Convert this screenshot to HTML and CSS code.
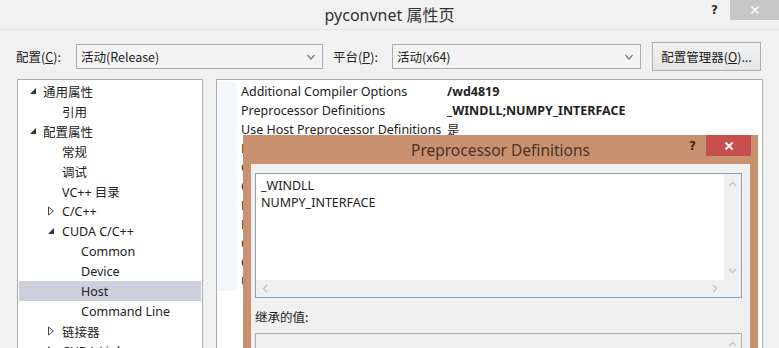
FILE: index.html
```html
<!DOCTYPE html>
<html lang="zh">
<head>
<meta charset="utf-8">
<title>pyconvnet 属性页</title>
<link rel="stylesheet" href="styles.css">
</head>
<body>
<div class="window">
  <div class="titlebar">
    <div></div>
    <div class="title">pyconvnet 属性页</div>
    <div class="caption-btns">
      <span class="help">?</span>
      <span class="close">
        <svg width="10" height="10" viewBox="0 0 10 10"><path d="M1.5 1.5 L8.5 8.5 M8.5 1.5 L1.5 8.5" stroke="#fff" stroke-width="1.5"/></svg>
      </span>
    </div>
  </div>

  <div class="toolbar">
    <label class="lbl lbl-config">配置(<u>C</u>):</label>
    <div class="combo combo-config"><span>活动(Release)</span><svg class="chev" width="8" height="6" viewBox="0 0 8 6"><path d="M0.5 1 L4 5 L7.5 1" fill="none" stroke="#777" stroke-width="1.2"/></svg></div>
    <label class="lbl lbl-platform">平台(<u>P</u>):</label>
    <div class="combo combo-platform"><span>活动(x64)</span><svg class="chev" width="8" height="6" viewBox="0 0 8 6"><path d="M0.5 1 L4 5 L7.5 1" fill="none" stroke="#777" stroke-width="1.2"/></svg></div>
    <button class="btn">配置管理器(<u>O</u>)...</button>
  </div>

  <div class="panels">
    <div class="tree">
      <div class="node l1"><span class="tog"><svg width="8" height="8" viewBox="0 0 8 8"><path d="M7 1 L7 7 L1 7 Z" fill="#333"/></svg></span>通用属性</div>
      <div class="node l2"><span class="tog"></span>引用</div>
      <div class="node l1"><span class="tog"><svg width="8" height="8" viewBox="0 0 8 8"><path d="M7 1 L7 7 L1 7 Z" fill="#333"/></svg></span>配置属性</div>
      <div class="node l2"><span class="tog"></span>常规</div>
      <div class="node l2"><span class="tog"></span>调试</div>
      <div class="node l2"><span class="tog"></span>VC++ 目录</div>
      <div class="node l2"><span class="tog"><svg width="8" height="10" viewBox="0 0 8 10"><path d="M1.5 1 L6.5 5 L1.5 9 Z" fill="none" stroke="#444" stroke-width="1"/></svg></span>C/C++</div>
      <div class="node l2"><span class="tog"><svg width="8" height="8" viewBox="0 0 8 8"><path d="M7 1 L7 7 L1 7 Z" fill="#333"/></svg></span>CUDA C/C++</div>
      <div class="node l3"><span class="tog"></span>Common</div>
      <div class="node l3"><span class="tog"></span>Device</div>
      <div class="node l3 selected"><span class="tog"></span>Host</div>
      <div class="node l3"><span class="tog"></span>Command Line</div>
      <div class="node l2"><span class="tog"><svg width="8" height="10" viewBox="0 0 8 10"><path d="M1.5 1 L6.5 5 L1.5 9 Z" fill="none" stroke="#444" stroke-width="1"/></svg></span>链接器</div>
      <div class="node l2"><span class="tog"><svg width="8" height="10" viewBox="0 0 8 10"><path d="M1.5 1 L6.5 5 L1.5 9 Z" fill="none" stroke="#444" stroke-width="1"/></svg></span>CUDA Linker</div>
    </div>

    <div class="grid">
      <div class="prop"><span class="stripe"></span><span class="name">Additional Compiler Options</span><span class="value">/wd4819</span></div>
      <div class="prop"><span class="stripe"></span><span class="name">Preprocessor Definitions</span><span class="value">_WINDLL;NUMPY_INTERFACE</span></div>
      <div class="prop"><span class="stripe"></span><span class="name">Use Host Preprocessor Definitions</span><span class="value plain">是</span></div>
      <div class="prop"><span class="stripe"></span><span class="name">Emulation</span></div>
      <div class="prop"><span class="stripe"></span><span class="name">Generate Hosted Debug Information</span></div>
      <div class="prop"><span class="stripe"></span><span class="name">Optimization</span></div>
      <div class="prop"><span class="stripe"></span><span class="name">Runtime Library</span></div>
      <div class="prop"><span class="stripe"></span><span class="name">Basic Runtime Checks</span></div>
      <div class="prop"><span class="stripe"></span><span class="name">Compiler Warning Level</span></div>
      <div class="prop"><span class="stripe"></span><span class="name">Check Allocation</span></div>
      <div class="prop"><span class="stripe"></span><span class="name">Use Host Library</span></div>
    </div>
  </div>

  <div class="dialog">
    <div class="dlg-title">
      <div></div>
      <div class="dlg-caption">Preprocessor Definitions</div>
      <div class="dlg-btns">
        <span class="dlg-help">?</span>
        <span class="dlg-close"><svg width="10" height="10" viewBox="0 0 10 10"><path d="M1.5 1.5 L8.5 8.5 M8.5 1.5 L1.5 8.5" stroke="#fff" stroke-width="1.8"/></svg></span>
      </div>
    </div>
    <div class="dlg-client">
      <div class="editbox">
        <div class="edit-main">
          <div class="edit-text">_WINDLL<br>NUMPY_INTERFACE</div>
          <div class="vscroll">
            <svg width="9" height="6" viewBox="0 0 9 6"><path d="M1 5 L4.5 1.5 L8 5" fill="none" stroke="#c4c4c4" stroke-width="1.4"/></svg>
            <svg width="9" height="6" viewBox="0 0 9 6"><path d="M1 1 L4.5 4.5 L8 1" fill="none" stroke="#c4c4c4" stroke-width="1.4"/></svg>
          </div>
        </div>
        <div class="hscroll">
          <svg width="6" height="9" viewBox="0 0 6 9"><path d="M5 1 L1.5 4.5 L5 8" fill="none" stroke="#c4c4c4" stroke-width="1.4"/></svg>
          <svg width="6" height="9" viewBox="0 0 6 9"><path d="M1 1 L4.5 4.5 L1 8" fill="none" stroke="#c4c4c4" stroke-width="1.4"/></svg>
          <span class="corner"></span>
        </div>
      </div>
      <div class="inherit-label">继承的值:</div>
      <div class="inherit-box">
        <div class="inherit-text"></div>
        <div class="vscroll small">
          <svg width="9" height="6" viewBox="0 0 9 6"><path d="M1 5 L4.5 1.5 L8 5" fill="none" stroke="#c4c4c4" stroke-width="1.4"/></svg>
        </div>
      </div>
    </div>
  </div>
</div>
</body>
</html>
```

FILE: styles.css
```css
* { box-sizing: border-box; }
html, body { margin: 0; padding: 0; }
body {
  width: 779px;
  height: 348px;
  overflow: hidden;
  background: #f0f0f0;
  font-family: "Noto Sans", "Noto Sans CJK SC", sans-serif;
  color: #1e1e1e;
}
.window {
  position: relative;
  width: 779px;
  height: 348px;
  background: #f1f1f1;
}

/* main title bar */
.titlebar {
  height: 30px;
  display: grid;
  grid-template-columns: 1fr auto 1fr;
  align-items: start;
  border-bottom: 1px solid #e3e3e3;
}
.title {
  font-family: "Noto Sans", "Noto Sans CJK SC", sans-serif;
  font-size: 16px;
  line-height: 30px;
  color: #333;
}
.caption-btns {
  display: flex;
  justify-content: flex-end;
  align-items: flex-start;
}
.help {
  font-family: "DejaVu Sans", sans-serif;
  font-weight: bold;
  font-size: 12px;
  line-height: 20px;
  color: #333;
  margin-right: 12px;
}
.close {
  width: 49px;
  height: 20px;
  background: #c7c7c7;
  display: flex;
  align-items: center;
  justify-content: center;
}

/* toolbar */
.toolbar {
  display: flex;
  align-items: center;
  height: 49px;
  padding: 4px 0 0 16px;
  font-family: "Noto Sans CJK SC", sans-serif;
}
.lbl {
  color: #222;
  font-size: 12.5px;
  white-space: nowrap;
  flex: none;
}
.lbl-config { width: 60px; }
.lbl-platform { width: 59px; margin-left: 10px; }
.combo {
  height: 25px;
  border: 1px solid #acacac;
  background: #f4f4f4;
  display: flex;
  align-items: center;
  justify-content: space-between;
  padding: 0 7px 0 4px;
  font-size: 12.5px;
  color: #222;
  flex: none;
}
.combo-config { width: 247px; }
.combo-platform { width: 249px; }
.btn {
  margin-left: 11px;
  width: 109px;
  height: 29px;
  border: 1px solid #acacac;
  background: linear-gradient(#f2f2f2, #e6e6e6);
  font-family: "Noto Sans CJK SC", sans-serif;
  font-size: 12.5px;
  color: #222;
  padding: 0;
  flex: none;
}

/* panels */
.panels {
  display: flex;
  gap: 13px;
  padding-left: 17px;
  height: 290px;
}
.tree {
  width: 186px;
  border: 1px solid #acacac;
  border-bottom: none;
  background: #fff;
  padding: 1px 1px 0;
  font-size: 12.5px;
  color: #222;
}
.node {
  height: 20px;
  display: flex;
  align-items: center;
  white-space: nowrap;
  font-family: "Noto Sans", "Noto Sans CJK SC", sans-serif;
}
.node .tog {
  width: 19px;
  height: 20px;
  display: flex;
  align-items: center;
  padding-left: 5px;
  flex: none;
}
.node.l1 { padding-left: 5px; }
.node.l2 { padding-left: 24px; }
.node.l3 { padding-left: 43px; }
.node.l2 .tog { padding-left: 4px; }
.node.selected { background: #cdd0dc; }

.grid {
  width: 547px;
  border: 1px solid #acacac;
  border-bottom: none;
  background: #fff;
  padding-top: 2px;
  font-size: 12.5px;
  color: #222;
}
.prop {
  height: 19px;
  display: flex;
  align-items: center;
  white-space: nowrap;
}
.stripe {
  width: 20px;
  height: 19px;
  background: #f3f6fb;
  flex: none;
}
.name {
  width: 210px;
  padding-left: 4px;
  flex: none;
  overflow: hidden;
}
.value { font-weight: bold; font-family: "Noto Sans", "Noto Sans CJK SC", sans-serif; }
.value.plain { font-weight: normal; }

/* dialog overlay */
.dialog {
  position: absolute;
  left: 243px;
  top: 135px;
  width: 515px;
  height: 230px;
  background: #c8916f;
  padding: 0 8px 0 8px;
}
.dlg-title {
  height: 29px;
  display: grid;
  grid-template-columns: 1fr auto 1fr;
  margin: 0 -8px;
}
.dlg-caption {
  font-size: 15.5px;
  line-height: 31px;
  color: #4f3223;
}
.dlg-btns {
  display: flex;
  justify-content: flex-end;
  align-items: flex-start;
  padding-right: 7px;
}
.dlg-help {
  font-family: "DejaVu Sans", sans-serif;
  font-weight: bold;
  font-size: 12px;
  line-height: 22px;
  color: #3a2418;
  margin-right: 10px;
}
.dlg-close {
  width: 45px;
  height: 21px;
  background: #c84f4f;
  display: flex;
  align-items: center;
  justify-content: center;
}
.dlg-client {
  background: #f0f0f0;
  height: 210px;
  padding: 9px 8px 0 4px;
}
.editbox {
  height: 125px;
  border: 1px solid #86a3bc;
  background: #fff;
  display: flex;
  flex-direction: column;
}
.edit-main {
  flex: 1;
  display: flex;
}
.edit-text {
  flex: 1;
  padding: 3px 0 0 5px;
  font-size: 12.5px;
  line-height: 17px;
  color: #222;
}
.vscroll {
  width: 17px;
  background: #f0f0f0;
  display: flex;
  flex-direction: column;
  justify-content: space-between;
  align-items: center;
  padding: 7px 0 6px;
}
.hscroll {
  height: 17px;
  background: #f0f0f0;
  display: flex;
  align-items: center;
  padding-left: 6px;
}
.hscroll svg:nth-child(2) { margin-left: auto; margin-right: 5px; }
.corner {
  width: 18px;
  height: 17px;
  background: #f0f0f0;
  border-left: 1px solid #e8f3fa;
}
.inherit-label {
  font-family: "Noto Sans CJK SC", sans-serif;
  font-size: 12.5px;
  color: #222;
  margin-top: 10px;
  line-height: 17px;
}
.inherit-box {
  margin-top: 8px;
  height: 40px;
  border: 1px solid #acacac;
  background: #f0f0f0;
  display: flex;
}
.inherit-text { flex: 1; }
.vscroll.small { justify-content: flex-start; padding-top: 7px; }
```
